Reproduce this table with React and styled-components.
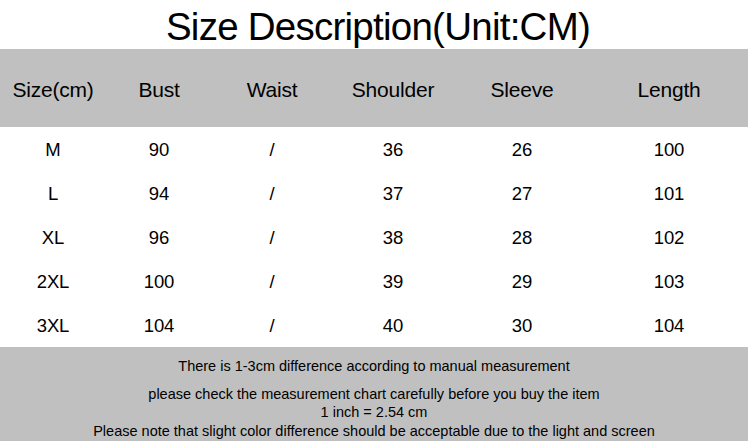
import React from "react";
import styled, { createGlobalStyle } from "styled-components";

const Global = createGlobalStyle`
  html, body { margin: 0; padding: 0; background: #ffffff; }
  body { font-family: "Liberation Sans", Arial, sans-serif; color: #000; }
`;

const Page = styled.div`
  width: 748px;
  display: flex;
  flex-direction: column;
`;

const Title = styled.h1`
  margin: 0;
  height: 49px;
  box-sizing: border-box;
  padding: 4px 0 0 8px;
  display: flex;
  align-items: center;
  justify-content: center;
  font-weight: 400;
  font-size: 38.5px;
  letter-spacing: -0.75px;
`;

const Row = styled.div`
  display: grid;
  grid-template-columns: 106px 106px 120px 122px 136px 158px;
  height: ${(p) => p.$h}px;
  background: ${(p) => (p.$head ? "#c0c0c0" : "#ffffff")};
  font-size: ${(p) => (p.$head ? 21 : 18.5)}px;
  letter-spacing: ${(p) => (p.$head ? -0.2 : -0.1)}px;
`;

const Cell = styled.div`
  display: flex;
  align-items: center;
  justify-content: center;
  padding-top: ${(p) => (p.$head ? 3 : 2)}px;
`;

const Notes = styled.div`
  background: #c0c0c0;
  height: 94px;
  box-sizing: border-box;
  padding-top: 10px;
  text-align: center;
  font-size: 14.5px;
  line-height: 18.7px;
`;

const Note = styled.div`
  margin-top: ${(p) => p.$gap || 0}px;
`;

const headers = ["Size(cm)", "Bust", "Waist", "Shoulder", "Sleeve", "Length"];
const rows = [
  ["M", "90", "/", "36", "26", "100"],
  ["L", "94", "/", "37", "27", "101"],
  ["XL", "96", "/", "38", "28", "102"],
  ["2XL", "100", "/", "39", "29", "103"],
  ["3XL", "104", "/", "40", "30", "104"],
];

export default function App() {
  return (
    <>
      <Global />
      <Page>
        <Title>Size Description(Unit:CM)</Title>
        <Row $head $h={78}>
          {headers.map((h) => (
            <Cell $head key={h}>{h}</Cell>
          ))}
        </Row>
        {rows.map((r) => (
          <Row key={r[0]} $h={44}>
            {r.map((v, i) => (
              <Cell key={i}>{v}</Cell>
            ))}
          </Row>
        ))}
        <Notes>
          <Note>There is 1-3cm difference according to manual measurement</Note>
          <Note $gap={9}>please check the measurement chart carefully before you buy the item</Note>
          <Note>1 inch = 2.54 cm</Note>
          <Note>Please note that slight color difference should be acceptable due to the light and screen</Note>
        </Notes>
      </Page>
    </>
  );
}
